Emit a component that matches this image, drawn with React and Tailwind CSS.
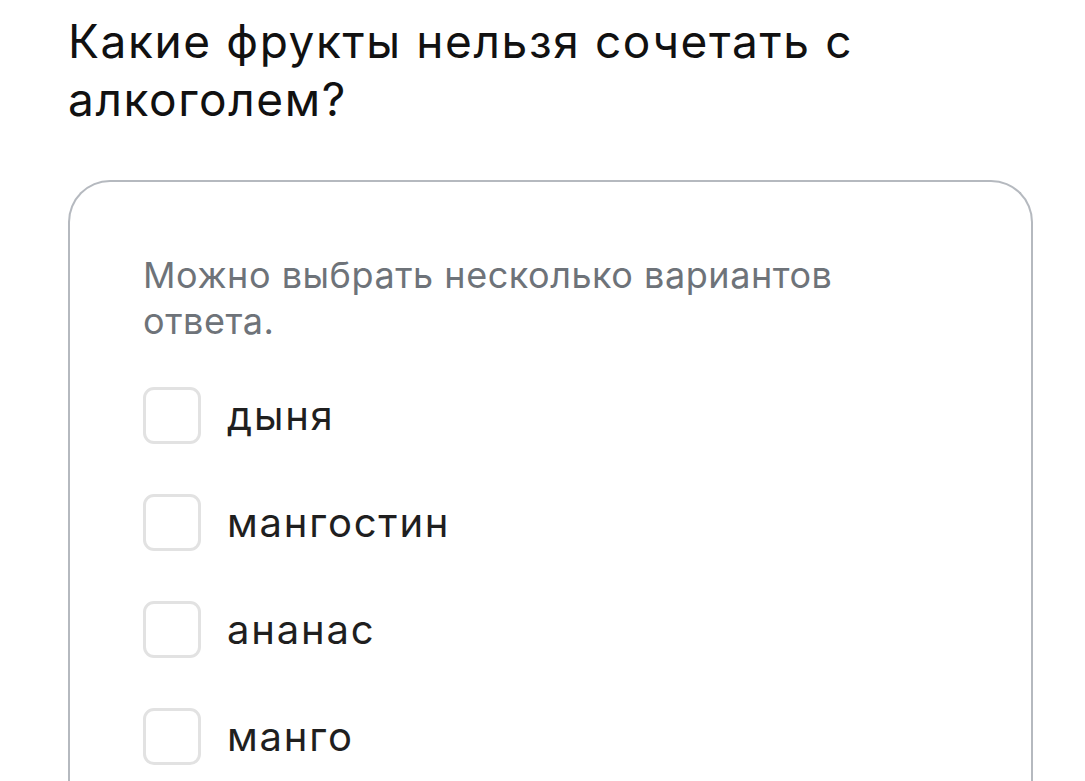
export default function App() {
  const options = ["дыня", "мангостин", "ананас", "манго"];
  return (
    <div className="h-[781px] w-[1085px] overflow-hidden bg-white font-['Inter',sans-serif]">
      <div className="pl-[68px] pr-[52px] pt-[12px]">
        <h1 className="text-[46px] leading-[58px] font-normal text-[#111111] tracking-[0.035em]">
          Какие фрукты нельзя сочетать с алкоголем?
        </h1>
        <div className="mt-[52px] w-[965px] rounded-t-[42px] border-[2.5px] border-b-0 border-[#b5b9bf] pl-[73px] pr-[60px] pt-[70px] pb-[40px]">
          <p className="text-[36px] leading-[46px] text-[#6e7379] tracking-[0.015em]">
            Можно выбрать несколько вариантов ответа.
          </p>
          <ul className="mt-[43px] flex flex-col gap-[50px]">
            {options.map((o) => (
              <li key={o} className="flex items-center gap-[26px]">
                <span className="block h-[57px] w-[58px] shrink-0 rounded-[11px] border-[3px] border-[#e2e2e2] bg-white" />
                <span className="text-[40px] leading-[48px] text-[#1f1f1f] tracking-[0.045em]">{o}</span>
              </li>
            ))}
          </ul>
        </div>
      </div>
    </div>
  );
}
